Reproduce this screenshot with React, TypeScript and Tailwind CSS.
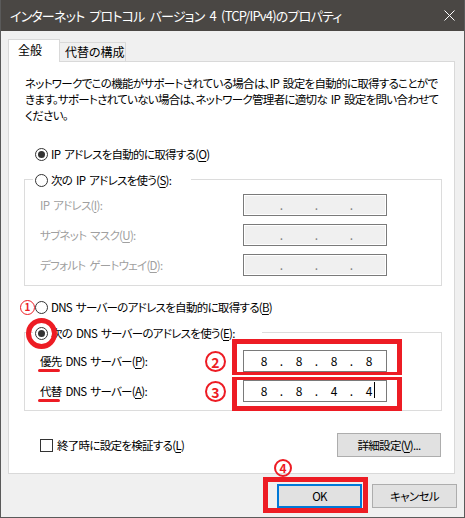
import { Fragment } from 'react';

function Key({ k }: { k: string }) {
  return (
    <>
      (<span className="underline underline-offset-[2px]">{k}</span>)
    </>
  );
}

function Radio({ checked }: { checked?: boolean }) {
  return (
    <span className="flex h-[13px] w-[13px] shrink-0 items-center justify-center rounded-full border border-[#333] bg-white">
      {checked && <span className="h-[7px] w-[7px] rounded-full bg-[#333]" />}
    </span>
  );
}

function IpField({
  values,
  disabled,
  caret,
}: {
  values?: string[];
  disabled?: boolean;
  caret?: boolean;
}) {
  const cells = values ?? ['', '', '', ''];
  return (
    <div
      className={`flex h-[22px] w-[144px] items-center border border-[#7a7a7a] pl-[5px] text-[12px] tracking-normal ${
        disabled
          ? 'bg-[#f0f0f0] text-[#808080] shadow-[inset_0_0_0_1px_#fff]'
          : 'bg-white text-black'
      }`}
    >
      {cells.map((v, i) => (
        <Fragment key={i}>
          <span className="w-[30px] text-center">
            <span className="relative">
              {v}
              {caret && i === 3 && (
                <span className="absolute -right-[3px] top-[0px] h-[16px] w-px bg-black" />
              )}
            </span>
          </span>
          {i < 3 && <span className="w-[5px] text-center">.</span>}
        </Fragment>
      ))}
    </div>
  );
}

export default function App() {
  return (
    <div className="relative flex h-[518px] w-[465px] flex-col border-x border-b border-[#5a5a5a] bg-[#f0f0f0] font-['Noto_Sans_CJK_JP',sans-serif] text-[11.5px] leading-[16px] tracking-[-0.7px] text-black [font-feature-settings:'palt'] [word-spacing:2px]">
      {/* title bar */}
      <div className="flex h-[31px] shrink-0 items-center justify-between bg-[#4a4744] pl-[9px] pr-[9px] text-[13px] tracking-[-0.8px] text-white [word-spacing:3px]">
        <span>インターネット プロトコル バージョン 4 (TCP/IPv4)のプロパティ</span>
        <svg width="11" height="11" viewBox="0 0 11 11">
          <path d="M0.5 0.5L10.5 10.5M10.5 0.5L0.5 10.5" stroke="#fff" strokeWidth="1" />
        </svg>
      </div>

      <div className="flex flex-1 flex-col pl-[7px] pr-[7px] pt-[8px]">
        {/* tabs */}
        <div className="flex h-[23px] items-end">
          <div className="relative z-10 h-[23px] w-[52px] border-x border-t border-[#d9d9d9] bg-white pl-[9px] pt-[2px] text-[12px] tracking-normal">
            全般
          </div>
          <div className="-ml-px h-[20px] w-[67px] border-x border-t border-[#d9d9d9] bg-[#f0f0f0] pl-[5px] pt-[1px] text-[12px] tracking-normal">
            代替の構成
          </div>
        </div>

        {/* panel */}
        <div className="-mt-px mr-[2px] flex h-[413px] flex-col border border-[#d9d9d9] bg-white pl-[15px] pr-[12px] pt-[13px]">
          <p className="whitespace-nowrap pl-[1px]">
            ネットワークでこの機能がサポートされている場合は、IP 設定を自動的に取得することがで
            <br />
            きます。サポートされていない場合は、ネットワーク管理者に適切な IP 設定を問い合わせて
            <br />
            ください。
          </p>

          <div className="mt-[23px] flex h-[16px] items-center gap-[3px] pl-[11px]">
            <Radio checked />
            <span>
              IP アドレスを自動的に取得する<Key k="O" />
            </span>
          </div>

          <div className="mt-[17px] flex flex-col border border-[#dcdcdc] pb-[9px]">
            <div className="-mt-[8px] ml-[8px] flex h-[16px] w-[158px] items-center gap-[3px] bg-white pl-[2px]">
              <Radio />
              <span>
                次の IP アドレスを使う<Key k="S" />:
              </span>
            </div>
            <div className="mt-[6px] flex flex-col gap-[8px] pl-[15px] text-[#a0a0a0]">
              <div className="flex items-center">
                <span className="w-[203px]">
                  IP アドレス<Key k="I" />:
                </span>
                <IpField disabled />
              </div>
              <div className="flex items-center">
                <span className="w-[203px]">
                  サブネット マスク<Key k="U" />:
                </span>
                <IpField disabled />
              </div>
              <div className="flex items-center">
                <span className="w-[203px]">
                  デフォルト ゲートウェイ<Key k="D" />:
                </span>
                <IpField disabled />
              </div>
            </div>
          </div>

          <div className="mt-[13px] flex h-[16px] items-center gap-[3px] pl-[11px]">
            <span className="relative">
              <Radio />
              <span className="absolute -left-[15px] -top-[1px] flex h-[15px] w-[15px] items-center justify-center rounded-full border-[1.5px] border-[#ed1c24] bg-white text-[10px] font-bold leading-none tracking-normal text-[#ed1c24]">
                1
              </span>
            </span>
            <span>
              DNS サーバーのアドレスを自動的に取得する<Key k="B" />
            </span>
          </div>

          <div className="mt-[17px] flex flex-col border border-[#dcdcdc] pb-[8px]">
            <div className="-mt-[8px] ml-[8px] flex h-[16px] w-[229px] items-center gap-[3px] bg-white pl-[2px]">
              <span className="relative">
                <Radio checked />
                <span className="absolute -left-[9px] -top-[9px] h-[31px] w-[31px] rounded-full border-[5px] border-[#ed1c24]" />
              </span>
              <span>
                次の DNS サーバーのアドレスを使う<Key k="E" />:
              </span>
            </div>
            <div className="mt-[9px] flex flex-col gap-[8px] pl-[15px]">
              <div className="flex items-center">
                <span className="w-[203px]">
                  <span className="relative">
                    優先
                    <span className="absolute -left-[2px] top-[16px] h-[3px] w-[22px] rounded-full bg-[#ed1c24]" />
                  </span>{' '}
                  DNS サーバー<Key k="P" />:
                </span>
                <div className="relative">
                  <IpField values={['8', '8', '8', '8']} />
                  <span className="absolute -left-[38px] top-[1px] flex h-[21px] w-[21px] items-center justify-center rounded-full border-[2.5px] border-[#ed1c24] text-[14px] font-bold leading-none tracking-normal text-[#ed1c24]">
                    2
                  </span>
                  <span className="absolute -left-[11px] -top-[11px] h-[36px] w-[170px] border-x-[5px] border-b-[3px] border-t-[5px] border-[#ed1c24]" />
                </div>
              </div>
              <div className="flex items-center">
                <span className="w-[203px]">
                  <span className="relative">
                    代替
                    <span className="absolute -left-[2px] top-[16px] h-[3px] w-[22px] rounded-full bg-[#ed1c24]" />
                  </span>{' '}
                  DNS サーバー<Key k="A" />:
                </span>
                <div className="relative">
                  <IpField values={['8', '8', '4', '4']} caret />
                  <span className="absolute -left-[38px] top-[1px] flex h-[21px] w-[21px] items-center justify-center rounded-full border-[2.5px] border-[#ed1c24] text-[14px] font-bold leading-none tracking-normal text-[#ed1c24]">
                    3
                  </span>
                  <span className="absolute -left-[11px] -top-[3px] h-[34px] w-[170px] border-x-[5px] border-b-[5px] border-t-[3px] border-[#ed1c24]" />
                </div>
              </div>
            </div>
          </div>

          <div className="mt-[22px] flex h-[24px] items-center justify-between pl-[16px]">
            <div className="flex items-center gap-[4px]">
              <span className="h-[13px] w-[13px] border border-[#333] bg-white" />
              <span>
                終了時に設定を検証する<Key k="L" />
              </span>
            </div>
            <button className="mr-[1px] h-[24px] w-[104px] border border-[#adadad] bg-[#e1e1e1]">
              詳細設定<Key k="V" />...
            </button>
          </div>
        </div>

        {/* dialog buttons */}
        <div className="mt-[10px] flex justify-end gap-[10px]">
          <div className="relative">
            <button className="h-[24px] w-[85px] border-2 border-[#0078d7] bg-[#e1e1e1]">OK</button>
            <span className="absolute -left-[3px] -top-[25px] flex h-[18px] w-[18px] items-center justify-center rounded-full border-[2px] border-[#ed1c24] text-[12px] font-bold leading-none tracking-normal text-[#ed1c24]">
              4
            </span>
            <span className="absolute -left-[14px] -top-[7px] h-[36px] w-[105px] border-[5px] border-[#ed1c24]" />
          </div>
          <button className="h-[24px] w-[85px] border border-[#adadad] bg-[#e1e1e1]">キャンセル</button>
        </div>
      </div>
    </div>
  );
}
